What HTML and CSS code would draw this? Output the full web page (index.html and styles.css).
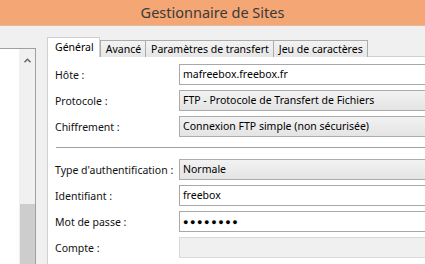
FILE: index.html
```html
<!DOCTYPE html>
<html lang="fr">
<head>
<meta charset="utf-8">
<title>Gestionnaire de Sites</title>
<link rel="stylesheet" href="styles.css">
</head>
<body>
<div class="window">
  <header class="titlebar">Gestionnaire de Sites</header>
  <div class="main">
    <aside class="sitelist">
      <div class="tree"></div>
      <div class="scrollbar">
        <span class="arrow"><svg width="7" height="5" viewBox="0 0 7 5"><path d="M0.5 4.2 L3.5 1.2 L6.5 4.2" fill="none" stroke="#606060" stroke-width="1.4"/></svg></span>
        <div class="thumb"></div>
      </div>
    </aside>
    <section class="tabs">
      <nav class="tabstrip">
        <div class="tab active">Général</div>
        <div class="tab">Avancé</div>
        <div class="tab">Paramètres de transfert</div>
        <div class="tab">Jeu de caractères</div>
      </nav>
      <div class="page">
        <div class="form">
          <label class="lbl">Hôte :</label>
          <div class="field input">mafreebox.freebox.fr</div>
          <label class="lbl">Protocole :</label>
          <div class="field select">FTP - Protocole de Transfert de Fichiers</div>
          <label class="lbl">Chiffrement :</label>
          <div class="field select">Connexion FTP simple (non sécurisée)</div>
        </div>
        <hr class="sep">
        <div class="form">
          <label class="lbl">Type d'authentification :</label>
          <div class="field select">Normale</div>
          <label class="lbl">Identifiant :</label>
          <div class="field input">freebox</div>
          <label class="lbl">Mot de passe :</label>
          <div class="field input pwd">●●●●●●●●</div>
          <label class="lbl">Compte :</label>
          <div class="field disabled"></div>
        </div>
      </div>
    </section>
  </div>
</div>
</body>
</html>
```

FILE: styles.css
```css
* { box-sizing: border-box; }
html, body { margin: 0; padding: 0; }
body {
  width: 425px;
  height: 264px;
  overflow: hidden;
  background: #f0f0f0;
  font-family: "Noto Sans", "Open Sans", sans-serif;
  font-size: 10.5px;
  color: #000;
}
.window { width: 425px; height: 264px; overflow: hidden; }
.titlebar {
  height: 26px;
  background: #f4a674;
  border-bottom: 1px solid #e2b99a;
  color: #3a3a3a;
  font-size: 14.5px;
  line-height: 25px;
  text-align: center;
}
.main {
  display: flex;
  align-items: flex-start;
}
.sitelist {
  margin-top: 22px;
  width: 36px;
  height: 230px;
  flex: none;
  display: flex;
  background: #fff;
  border: 1px solid #a0a0a0;
  border-left: none;
  border-bottom: none;
}
.tree { flex: 1; }
.scrollbar {
  width: 16px;
  background: #f0f0f0;
  display: flex;
  flex-direction: column;
  align-items: center;
}
.arrow { height: 20px; display: flex; align-items: center; margin-top: 1px; }
.thumb {
  margin-top: 134px;
  width: 15px;
  flex: 1;
  background: #cdcdcd;
}
.tabs {
  margin-left: 11px;
  margin-top: 11px;
  width: 400px;
  flex: none;
}
.tabstrip {
  display: flex;
  align-items: flex-end;
  height: 20px;
  position: relative;
  z-index: 1;
}
.tab {
  height: 17px;
  padding: 0 4px 0 5px;
  line-height: 16px;
  background: linear-gradient(#f3f3f3, #e6e6e6);
  border: 1px solid #acacac;
  border-bottom: none;
  margin-left: -1px;
  white-space: nowrap;
}
.tab.active {
  height: 20px;
  margin-left: 0;
  padding: 0 5px 0 7px;
  background: #fff;
  line-height: 18px;
  border-color: #d0d0d0;
  margin-right: 1px;
}
.page {
  background: #fff;
  border: 1px solid #d0d0d0;
  border-right: none;
  margin-top: -1px;
  padding: 7px 0 20px 7px;
  height: 230px;
}
.form {
  display: grid;
  grid-template-columns: 124px 260px;
  row-gap: 5px;
  align-items: center;
}
.lbl { white-space: nowrap; color: #111; }
.field {
  height: 21px;
  line-height: 19px;
  padding-left: 3px;
  white-space: nowrap;
  border: 1px solid #abadb3;
  border-right: none;
}
.input { background: #fff; border-color: #a8a8a8; }
.select {
  background: linear-gradient(#f2f2f2, #e4e4e4);
  border-color: #acacac;
}
.pwd { font-size: 9px; letter-spacing: 1.6px; color: #000; }
.disabled { background: #f0f0f0; border-color: #d9d9d9; }
.sep {
  margin: 10px 0 11px 1px;
  border: none;
  border-top: 1px solid #a0a0a0;
  height: 0;
}
```
